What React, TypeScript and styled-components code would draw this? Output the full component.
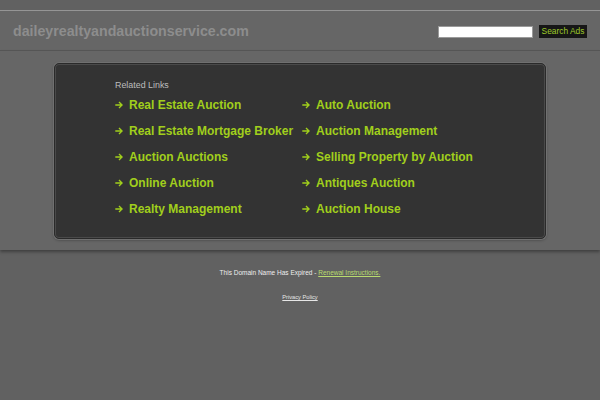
import React from "react";
import styled, { createGlobalStyle } from "styled-components";

const Global = createGlobalStyle`
  html, body { margin: 0; padding: 0; background: #616161; }
  body { font-family: "Liberation Sans", Arial, sans-serif; width: 600px; height: 400px; overflow: hidden; }
`;

const Page = styled.div`
  display: flex;
  flex-direction: column;
  padding-top: 10px;
`;

const Header = styled.header`
  height: 39px;
  border-top: 1px solid #959595;
  border-bottom: 1px solid #575757;
  background: #666666;
  display: flex;
  align-items: center;
  justify-content: space-between;
  padding: 0 13px;
`;

const Domain = styled.div`
  font-size: 14.2px;
  font-weight: bold;
  color: #8d8d8d;
`;

const SearchForm = styled.form`
  display: flex;
  align-items: center;
  gap: 6px;
  margin-top: 2px;
`;

const SearchInput = styled.input`
  width: 95px;
  height: 12px;
  box-sizing: border-box;
  padding: 0;
  border: 1px solid #9a9a9a;
  background: #fff;
  margin: 0;
`;

const SearchButton = styled.button`
  height: 13px;
  width: 48px;
  padding: 0;
  margin: 0;
  border: none;
  background: #161616;
  color: #9ecb2a;
  font-family: "Liberation Sans", Arial, sans-serif;
  font-size: 8.4px;
  line-height: 13px;
`;

const Content = styled.main`
  background: #666666;
  padding: 12px 54px 11px 54px;
  box-shadow: 0 2px 3px rgba(0, 0, 0, 0.35);
  position: relative;
`;

const Panel = styled.section`
  background: #333333;
  border-radius: 5px;
  border: 1px solid #2a2a2a;
  box-shadow: 0 0 0 1px #707070, inset 0 0 0 1px #4a4a4a, 0 1px 3px rgba(0, 0, 0, 0.4);
  height: 176px;
  box-sizing: border-box;
  padding: 15px 0 0 60px;
`;

const Caption = styled.div`
  font-size: 8.9px;
  color: #bdbdbd;
  line-height: 13px;
`;

const LinkGrid = styled.div`
  display: grid;
  grid-template-columns: 187px auto;
`;

const LinkRow = styled.a`
  display: flex;
  align-items: center;
  height: 26px;
  color: #a1cf1c;
  font-size: 12px;
  font-weight: bold;
  text-decoration: none;
  white-space: nowrap;
`;

const ArrowIcon = styled.svg`
  width: 8px;
  height: 8px;
  margin-right: 6px;
  flex: none;
`;

const Footer = styled.footer`
  display: flex;
  flex-direction: column;
  align-items: center;
  padding-top: 18px;
  font-size: 6.5px;
  color: #eeeeee;
`;

const Notice = styled.div`
  line-height: 10px;
`;

const NoticeLink = styled.a`
  color: #b9db6e;
  text-decoration: underline;
`;

const Privacy = styled.a`
  margin-top: 14px;
  font-size: 5.7px;
  color: #e6e6e6;
  text-decoration: underline;
  line-height: 10px;
`;

const left = [
  "Real Estate Auction",
  "Real Estate Mortgage Broker",
  "Auction Auctions",
  "Online Auction",
  "Realty Management",
];
const right = [
  "Auto Auction",
  "Auction Management",
  "Selling Property by Auction",
  "Antiques Auction",
  "Auction House",
];

const Arrow = () => (
  <ArrowIcon viewBox="0 0 8 8" aria-hidden="true">
    <path
      d="M0.3 4 H7 M4 1 L7 4 L4 7"
      fill="none"
      stroke="currentColor"
      strokeWidth="1.4"
    />
  </ArrowIcon>
);

export default function App() {
  const items: string[] = [];
  left.forEach((l, i) => {
    items.push(l, right[i]);
  });
  return (
    <>
      <Global />
      <Page>
        <Header>
          <Domain>daileyrealtyandauctionservice.com</Domain>
          <SearchForm onSubmit={(e) => e.preventDefault()}>
            <SearchInput type="text" />
            <SearchButton type="submit">Search Ads</SearchButton>
          </SearchForm>
        </Header>
        <Content>
          <Panel>
            <Caption>Related Links</Caption>
            <LinkGrid>
              {items.map((t) => (
                <LinkRow key={t} href="#">
                  <Arrow />
                  {t}
                </LinkRow>
              ))}
            </LinkGrid>
          </Panel>
        </Content>
        <Footer>
          <Notice>
            This Domain Name Has Expired - <NoticeLink href="#">Renewal Instructions.</NoticeLink>
          </Notice>
          <Privacy href="#">Privacy Policy</Privacy>
        </Footer>
      </Page>
    </>
  );
}
